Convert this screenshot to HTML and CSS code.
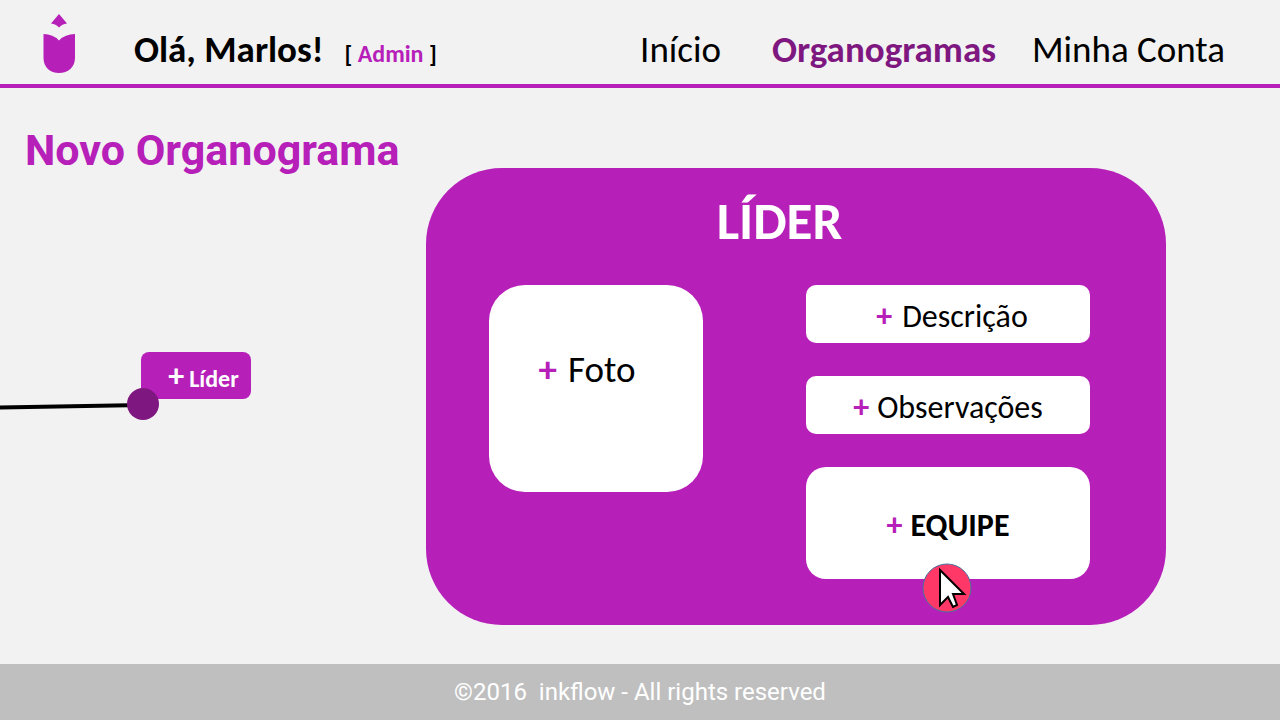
FILE: index.html
```
<!DOCTYPE html>
<html lang="pt-BR">
<head>
<meta charset="utf-8">
<meta name="viewport" content="width=device-width, initial-scale=1">
<title>Novo Organograma - inkflow</title>
<link rel="stylesheet" href="styles.css">
</head>
<body>
<header class="topbar">
  <svg class="logo" viewBox="0 0 32 60" role="img" aria-label="inkflow">
    <path d="M16 0 L24 9.500 Q19 10 16 13.500 Q13 10 8 9.500 Z"/>
    <path d="M.5 20 Q10 20 16 26.500 Q22 20 32 20 V44 C32 53 25 59 16 59 C7 59 .5 53 .5 44 Z"/>
  </svg>
  <p class="greeting">Olá, Marlos<span class="bang">!</span></p>
  <p class="role">[ <span class="role-name">Admin</span> ]</p>
  <nav class="nav">
    <a href="#">Início</a>
    <a class="current" href="#" aria-current="page">Organogramas</a>
    <a href="#">Minha Conta</a>
  </nav>
</header>
<main class="content">
  <section class="chart">
    <h1 class="title">Novo Organograma</h1>
    <div class="canvas">
      <svg class="edge" width="143" height="8" viewBox="0 0 143 8" aria-hidden="true"><path d="M0 5.500 L143 3"/></svg>
      <button class="node" type="button"><span class="node-plus">+</span>Líder</button>
      <span class="anchor"></span>
    </div>
  </section>
  <section class="panel">
    <h2 class="panel-title">LÍDER</h2>
    <div class="fields">
      <button class="field photo" type="button"><span class="plus">+</span>Foto</button>
      <div class="stack">
        <button class="field wide" type="button"><span class="plus">+</span>Descrição</button>
        <button class="field" type="button"><span class="plus">+</span>Observações</button>
        <div class="team-wrap">
          <button class="field team" type="button"><span class="plus">+</span>EQUIPE</button>
          <svg class="pointer" viewBox="0 0 50 50" aria-hidden="true">
            <circle cx="25" cy="25" r="24"/>
            <path d="M18 7 L18 42 L26 34 L31 44 L35 42 L31 31 L42 31 Z"/>
          </svg>
        </div>
      </div>
    </div>
  </section>
</main>
<footer class="footer">©2016 &nbsp;inkflow - All rights reserved</footer>
</body>
</html>
```
FILE: styles.css
```
* { box-sizing: border-box; }

body {
  margin: 0;
  min-height: 100vh;
  display: flex;
  flex-direction: column;
  background: #f2f2f2;
  color: #000;
  font-family: Carlito, Lato, "Open Sans", sans-serif;
}

h1, h2, p { margin: 0; }

button {
  border: 0;
  font-family: inherit;
  color: inherit;
  cursor: pointer;
}

.topbar {
  display: flex;
  align-items: center;
  height: 88px;
  padding: 14px 55px 0 43px;
  border-bottom: 4px solid #b620b9;
}

.logo {
  align-self: flex-start;
  width: 32px;
  height: 60px;
  margin-right: 59px;
  fill: #b620b9;
}

.greeting {
  font-size: 37px;
  font-weight: bold;
}

.bang { font-size: 36px; }

.role {
  margin: 8px 0 0 21px;
  font-size: 24px;
  font-weight: bold;
}

.role-name { color: #b620b9; }

.nav {
  display: flex;
  margin-left: auto;
  font-size: 37px;
}

.nav a {
  color: #000;
  text-decoration: none;
}

.nav .current {
  margin: 0 36px 0 51px;
  color: #7f1780;
  font-weight: bold;
}

.content {
  flex: 1;
  display: grid;
  grid-template-columns: 426fr 740fr 114fr;
  align-items: start;
}

.title {
  padding: 36px 0 0 25px;
  color: #b620b9;
  font: bold 43px/52px Roboto, sans-serif;
  white-space: nowrap;
}

.canvas {
  position: relative;
  height: 300px;
}

.edge {
  position: absolute;
  left: 0;
  top: 226px;
}

.edge path {
  stroke: #000;
  stroke-width: 4;
}

.node {
  position: absolute;
  left: 141px;
  top: 176px;
  width: 110px;
  height: 47px;
  padding: 6px 0 0 15px;
  border-radius: 8px;
  background: #b620b9;
  color: #fff;
  font-size: 24px;
  font-weight: bold;
}

.node-plus {
  margin-right: 5px;
  font-size: 32px;
  line-height: 20px;
}

.anchor {
  position: absolute;
  left: 127px;
  top: 212px;
  width: 32px;
  height: 32px;
  border-radius: 50%;
  background: #7f1780;
}

.panel {
  min-height: 457px;
  margin-top: 80px;
  padding: 23px 76px 45px 63px;
  border-radius: 76px;
  background: #b620b9;
}

.panel-title {
  padding-right: 20px;
  color: #fff;
  font-size: 53px;
  line-height: 60px;
  text-align: center;
}

.fields {
  display: flex;
  justify-content: space-between;
  margin-top: 34px;
}

.field {
  display: flex;
  align-items: center;
  justify-content: center;
  gap: 8px;
  width: 100%;
  height: 58px;
  padding: 4px 0 0;
  border-radius: 10px;
  background: #fff;
  font-size: 32px;
}

.wide {
  gap: 10px;
  padding-left: 8px;
}

.plus {
  color: #b620b9;
  font-weight: bold;
}

.photo {
  width: 214px;
  height: 207px;
  gap: 11px;
  padding: 0 18px 38px 0;
  border-radius: 36px;
  font-size: 37px;
}

.stack {
  display: flex;
  flex-direction: column;
  gap: 33px;
  width: 284px;
}

.team-wrap { position: relative; }

.team {
  height: 112px;
  border-radius: 20px;
  font-weight: bold;
}

.pointer {
  position: absolute;
  left: 116px;
  top: 96px;
  width: 50px;
  height: 50px;
}

.pointer circle {
  fill: #ff3868;
  stroke: #45739e;
}

.pointer path {
  fill: #fff;
  stroke: #000;
  stroke-width: 2;
}

.footer {
  height: 56px;
  background: #bfbfbf;
  color: #fff;
  font: 24px/56px Roboto, sans-serif;
  text-align: center;
}
```
